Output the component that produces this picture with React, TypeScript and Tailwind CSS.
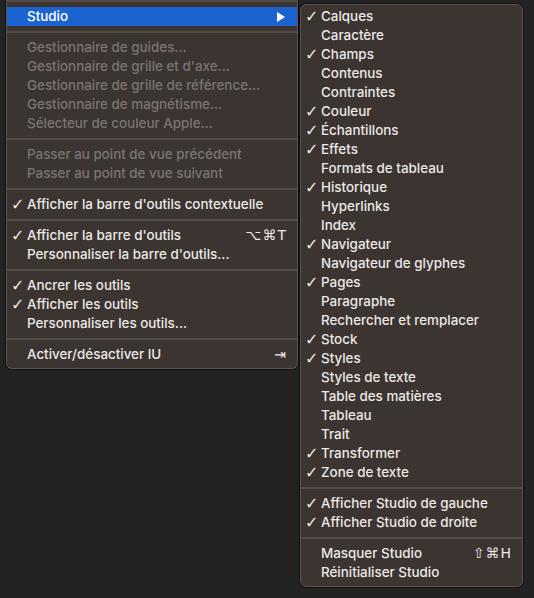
import type { ReactNode } from 'react';

type Item = {
  label: string;
  checked?: boolean;
  disabled?: boolean;
  shortcut?: ReactNode;
  active?: boolean;
  submenu?: boolean;
};

type Entry = Item | 'sep';

const mainMenu: Entry[] = [
  { label: 'Studio', active: true, submenu: true },
  'sep',
  { label: 'Gestionnaire de guides...', disabled: true },
  { label: "Gestionnaire de grille et d'axe...", disabled: true },
  { label: 'Gestionnaire de grille de référence...', disabled: true },
  { label: 'Gestionnaire de magnétisme...', disabled: true },
  { label: 'Sélecteur de couleur Apple...', disabled: true },
  'sep',
  { label: 'Passer au point de vue précédent', disabled: true },
  { label: 'Passer au point de vue suivant', disabled: true },
  'sep',
  { label: "Afficher la barre d'outils contextuelle", checked: true },
  'sep',
  { label: "Afficher la barre d'outils", checked: true, shortcut: '⌥⌘T' },
  { label: "Personnaliser la barre d'outils..." },
  'sep',
  { label: 'Ancrer les outils', checked: true },
  { label: 'Afficher les outils', checked: true },
  { label: 'Personnaliser les outils...' },
  'sep',
  { label: 'Activer/désactiver IU', shortcut: '⇥' },
];

const studioMenu: Entry[] = [
  { label: 'Calques', checked: true },
  { label: 'Caractère' },
  { label: 'Champs', checked: true },
  { label: 'Contenus' },
  { label: 'Contraintes' },
  { label: 'Couleur', checked: true },
  { label: 'Échantillons', checked: true },
  { label: 'Effets', checked: true },
  { label: 'Formats de tableau' },
  { label: 'Historique', checked: true },
  { label: 'Hyperlinks' },
  { label: 'Index' },
  { label: 'Navigateur', checked: true },
  { label: 'Navigateur de glyphes' },
  { label: 'Pages', checked: true },
  { label: 'Paragraphe' },
  { label: 'Rechercher et remplacer' },
  { label: 'Stock', checked: true },
  { label: 'Styles', checked: true },
  { label: 'Styles de texte' },
  { label: 'Table des matières' },
  { label: 'Tableau' },
  { label: 'Trait' },
  { label: 'Transformer', checked: true },
  { label: 'Zone de texte', checked: true },
  'sep',
  { label: 'Afficher Studio de gauche', checked: true },
  { label: 'Afficher Studio de droite', checked: true },
  'sep',
  { label: 'Masquer Studio', shortcut: '⇧⌘H' },
  { label: 'Réinitialiser Studio' },
];

function Separator() {
  return (
    <div className="h-[12px] flex items-center">
      <div className="h-[2px] w-full bg-[#524b48]" />
    </div>
  );
}

function Row({ item }: { item: Item }) {
  const color = item.disabled ? 'text-[#7b7572]' : 'text-[#ebe8e6]';
  return (
    <div
      className={`relative h-[19px] flex items-center pl-[20px] pr-[10px] ${
        item.active ? 'bg-[#1b63d0] text-white' : color
      }`}
    >
      {item.checked && (
        <span className="absolute left-[4px] top-0 h-[19px] flex items-center text-[16px] font-['DejaVu_Sans',sans-serif] font-bold">
          ✓
        </span>
      )}
      <span className="flex-1 whitespace-nowrap">{item.label}</span>
      {item.shortcut && (
        <span className="font-['DejaVu_Sans',sans-serif] text-[14px] tracking-[1px]">{item.shortcut}</span>
      )}
      {item.submenu && (
        <svg width="8" height="10" viewBox="0 0 8 10" className="mr-[2px]">
          <path d="M0 0 L8 5 L0 10 Z" fill="white" />
        </svg>
      )}
    </div>
  );
}

function Menu({ entries }: { entries: Entry[] }) {
  return (
    <>
      {entries.map((e, i) => (e === 'sep' ? <Separator key={i} /> : <Row key={i} item={e} />))}
    </>
  );
}

export default function App() {
  return (
    <div className="w-[534px] h-[598px] bg-[#232323] overflow-hidden font-['Inter',sans-serif] text-[13.4px] font-medium">
      <div className="flex items-start">
        <div className="ml-[6px] w-[292px] bg-[#3b3431] rounded-b-[6px] border-x border-b border-[#5c5552] shadow-[0_0_0_1px_rgba(0,0,0,0.55)] pb-[4px]">
          <div className="h-[7px] flex items-start">
            <div className="h-[2px] w-full bg-[#524b48]" />
          </div>
          <Menu entries={mainMenu} />
        </div>
        <div className="ml-[2px] mt-[4px] w-[223px] bg-[#3b3431] rounded-[6px] border border-[#5c5552] shadow-[0_0_0_1px_rgba(0,0,0,0.55)] pt-[2px] pb-[4px]">
          <Menu entries={studioMenu} />
        </div>
      </div>
    </div>
  );
}
